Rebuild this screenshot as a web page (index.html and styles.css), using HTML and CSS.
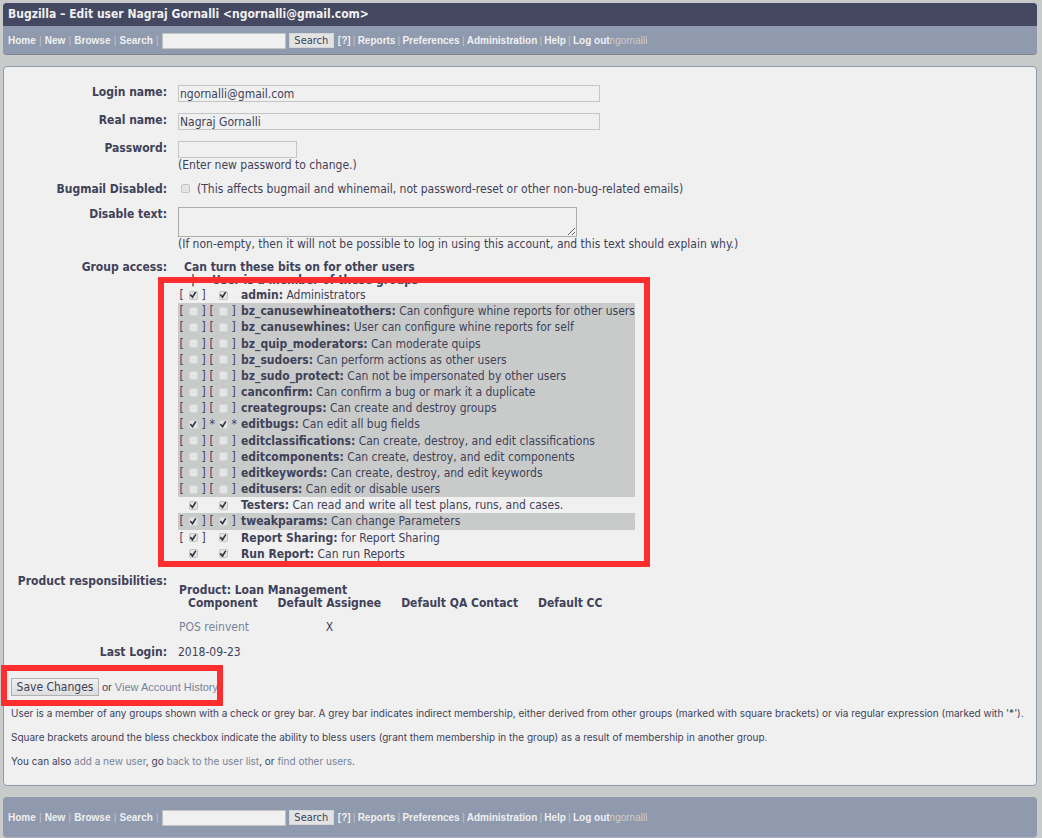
FILE: index.html
```html
<!DOCTYPE html>
<html lang="en">
<head>
<meta charset="utf-8">
<meta name="viewport" content="width=device-width, initial-scale=1">
<title>Bugzilla – Edit user Nagraj Gornalli</title>
<link rel="stylesheet" href="styles.css">
</head>
<body>
<header class="header">
  <h1 class="title">Bugzilla – Edit user Nagraj Gornalli &lt;ngornalli@gmail.com&gt;</h1>
  <nav class="nav" aria-label="Main">
    <a href="#">Home</a><i>|</i><a href="#">New</a><i>|</i><a href="#">Browse</a><i>|</i><a href="#">Search</a><i>|</i>
    <input class="nav-input" type="text" aria-label="Quick search"><button class="nav-button" type="button">Search</button>
    <a href="#">[?]</a><i>|</i><a href="#">Reports</a><i>|</i><a href="#">Preferences</a><i>|</i><a href="#">Administration</a><i>|</i><a href="#">Help</a><i>|</i><a href="#">Log out</a><span class="who">ngornalli</span>
  </nav>
</header>

<main class="panel">
  <form class="form">
    <label class="label" for="login">Login name:</label>
    <div class="field row-text"><input class="text wide" id="login" type="text" value="ngornalli@gmail.com"></div>

    <label class="label" for="real">Real name:</label>
    <div class="field row-text"><input class="text wide" id="real" type="text" value="Nagraj Gornalli"></div>

    <label class="label" for="pass">Password:</label>
    <div class="field row-pass"><input class="text short" id="pass" type="password"><div class="hint">(Enter new password to change.)</div></div>

    <label class="label" for="mail">Bugmail Disabled:</label>
    <div class="field row-mail"><input class="check" id="mail" type="checkbox"><span>(This affects bugmail and whinemail, not password-reset or other non-bug-related emails)</span></div>

    <label class="label" for="disable">Disable text:</label>
    <div class="field row-area"><textarea class="area" id="disable"></textarea><div class="hint">(If non-empty, then it will not be possible to log in using this account, and this text should explain why.)</div></div>

    <div class="label">Group access:</div>
    <div class="field groups">
      <div class="group-head">Can turn these bits on for other users</div>
      <div class="group-sub"><span>|</span><span>User is a member of these groups</span></div>
      <table class="group-table" id="groups" aria-label="Group access"><tbody></tbody></table>
      <div class="mark mark-groups"></div>
    </div>

    <div class="label">Product responsibilities:</div>
    <div class="field products">
      <table class="product-table">
        <caption>Product: Loan Management</caption>
        <thead><tr><th>Component</th><th>Default Assignee</th><th>Default QA Contact</th><th>Default CC</th></tr></thead>
        <tbody><tr><td class="component"><a href="#">POS reinvent</a></td><td>X</td><td></td><td></td></tr></tbody>
      </table>
    </div>

    <div class="label">Last Login:</div>
    <div class="field hint">2018-09-23</div>
  </form>

  <div class="actions">
    <button class="save" type="button">Save Changes</button>
    <span>or <a href="#">View Account History</a></span>
    <div class="mark mark-save"></div>
  </div>

  <div class="notes">
    <p>User is a member of any groups shown with a check or grey bar. A grey bar indicates indirect membership, either derived from other groups (marked with square brackets) or via regular expression (marked with '*').</p>
    <p>Square brackets around the bless checkbox indicate the ability to bless users (grant them membership in the group) as a result of membership in another group.</p>
    <p>You can also <a href="#">add a new user</a>, go <a href="#">back to the user list</a>, or <a href="#">find other users</a>.</p>
  </div>
</main>

<footer class="footer">
  <nav class="nav" aria-label="Footer">
    <a href="#">Home</a><i>|</i><a href="#">New</a><i>|</i><a href="#">Browse</a><i>|</i><a href="#">Search</a><i>|</i>
    <input class="nav-input" type="text" aria-label="Quick search"><button class="nav-button" type="button">Search</button>
    <a href="#">[?]</a><i>|</i><a href="#">Reports</a><i>|</i><a href="#">Preferences</a><i>|</i><a href="#">Administration</a><i>|</i><a href="#">Help</a><i>|</i><a href="#">Log out</a><span class="who">ngornalli</span>
  </nav>
</footer>
<script src="groups.js"></script>
</body>
</html>
```

FILE: groups.js
```js
// name, description, bless brackets, member marks, checked, indirect (grey bar)
const groups = [
  ["admin", "Administrators", "[]", "", true, false],
  ["bz_canusewhineatothers", "Can configure whine reports for other users", "[]", "[]", false, true],
  ["bz_canusewhines", "User can configure whine reports for self", "[]", "[]", false, true],
  ["bz_quip_moderators", "Can moderate quips", "[]", "[]", false, true],
  ["bz_sudoers", "Can perform actions as other users", "[]", "[]", false, true],
  ["bz_sudo_protect", "Can not be impersonated by other users", "[]", "[]", false, true],
  ["canconfirm", "Can confirm a bug or mark it a duplicate", "[]", "[]", false, true],
  ["creategroups", "Can create and destroy groups", "[]", "[]", false, true],
  ["editbugs", "Can edit all bug fields", "[]", "**", true, true],
  ["editclassifications", "Can create, destroy, and edit classifications", "[]", "[]", false, true],
  ["editcomponents", "Can create, destroy, and edit components", "[]", "[]", false, true],
  ["editkeywords", "Can create, destroy, and edit keywords", "[]", "[]", false, true],
  ["editusers", "Can edit or disable users", "[]", "[]", false, true],
  ["Testers", "Can read and write all test plans, runs, and cases.", "", "", true, false],
  ["tweakparams", "Can change Parameters", "[]", "[]", true, true],
  ["Report Sharing", "for Report Sharing", "[]", "", true, false],
  ["Run Report", "Can run Reports", "", "", true, false]
];

const box = (marks, checked, id, label) =>
  `<td class="bit"><span class="marks"><span>${marks[0] || ""}</span>` +
  `<input class="check" type="checkbox" id="${id}" aria-label="${label}"${checked ? " checked" : ""}>` +
  `<span>${marks[1] || ""}</span></span></td>`;

document.querySelector("#groups tbody").innerHTML = groups.map(
  ([name, text, bless, member, checked, indirect], i) =>
    `<tr${indirect ? ' class="indirect"' : ""}>` +
    box(bless, checked, `bless${i}`, `Bless ${name}`) +
    box(member, checked, `member${i}`, `Member of ${name}`) +
    `<td class="group-name"><label for="member${i}"><strong>${name}:</strong> ${text}</label></td></tr>`
).join("");
```

FILE: styles.css
```css
* { box-sizing: border-box; }

body {
  margin: 0;
  padding: 3px 5px 1px 3px;
  background: #c9cbca;
  color: #3f4258;
  font: 12px/14px "DejaVu Sans Condensed", "DejaVu Sans", sans-serif;
}

a { color: #76849a; text-decoration: none; }

.header,
.footer {
  background: #8f9aaf;
  border-radius: 4px;
}

.header { border-bottom: 1px solid #7c8290; overflow: hidden; }

.footer {
  padding: 6px 0;
  border-bottom: 1px solid #aeb2b8;
}

.title {
  margin: 0;
  padding: 0 5px;
  background: #444860;
  color: #f0f0f0;
  font-size: 12px;
  line-height: 23px;
}

.nav {
  display: flex;
  align-items: center;
  height: 28px;
  padding: 1px 5px 0;
  font: bold 10px/14px "Liberation Sans", Arial, sans-serif;
  color: #c4c4c0;
  white-space: nowrap;
}

.nav a { color: #f0f0f0; }
.nav i { width: 9px; text-align: center; font-style: normal; font-weight: normal; }
.nav-input ~ i { width: 7px; }
.who { color: #cfcdc4; font-weight: normal; }

.nav-input {
  width: 124px;
  height: 16px;
  padding: 0 2px;
  border: 1px solid #c4c4c0;
  background: #f0f0f0;
}

.nav-button {
  width: 45px;
  height: 15px;
  margin: 0 4px 0 3px;
  padding: 0;
  border: 1px solid #d6d6d6;
  background: #e2e3e3;
  color: #3f4258;
  font: 11px/12px "DejaVu Sans Condensed", "DejaVu Sans", sans-serif;
}

.panel {
  margin: 11px 0;
  padding: 18px 7px 7px;
  border: 1px solid #8f9aaf;
  border-radius: 4px;
  background: #f0f0f0;
}

.form {
  display: grid;
  grid-template-columns: 156px 1fr;
  column-gap: 11px;
}

.label { font-weight: bold; text-align: right; }

.hint { line-height: 14px; }
.row-text { height: 28px; }
.row-pass { height: 41px; }
.row-area { height: 53px; }
.row-mail { display: flex; gap: 7px; height: 25px; padding-left: 3px; }

.text {
  display: block;
  height: 17px;
  padding: 0 1px;
  border: 1px solid #c4c6c5;
  background: #f0f0f0;
  color: #3f4258;
  font: inherit;
}

.wide { width: 422px; max-width: 100%; }
.short { width: 119px; }

.area {
  display: block;
  width: 399px;
  max-width: 100%;
  height: 30px;
  border: 1px solid #acaea8;
  background: #f0f0f0;
  font: inherit;
}

.check {
  appearance: none;
  flex: none;
  width: 9px;
  height: 9px;
  margin: 0;
  border: 1px solid #c2c4c3;
  border-radius: 2px;
  background: #e4e5e5;
}

.row-mail .check { margin-top: 2px; }

.check:checked::before {
  content: "";
  display: block;
  width: 7px;
  height: 7px;
  background: #333645;
  clip-path: polygon(0 50%, 20% 35%, 40% 60%, 80% 0, 100% 10%, 45% 100%);
}

.groups { position: relative; height: 314px; }
.group-head,
.group-sub { padding-left: 6px; font-weight: bold; }
.group-sub { display: flex; gap: 17px; height: 13px; padding-left: 13px; line-height: 12px; }

.group-table {
  width: 453px;
  height: 275px;
  border-spacing: 0;
  line-height: 14px;
}

.group-table td { padding: 0; }
.group-table .bit { width: 30px; }
.group-table .group-name { padding-left: 3px; white-space: nowrap; }
.indirect { background: #c9cbca; }
.indirect .check { border-color: #d4d5d4; }

.marks {
  display: flex;
  align-items: center;
  justify-content: center;
  gap: 4px;
  width: 30px;
  height: 14px;
}

.marks span { width: 5px; }

/* Red highlight frames drawn over the form */
.mark {
  position: absolute;
  border: 6px solid #ff2e2e;
  pointer-events: none;
}

.mark-groups { top: 17px; left: -20px; width: 492px; height: 290px; }
.mark-save { top: -13px; left: -10px; width: 222px; height: 41px; }

.products { height: 71px; padding-top: 10px; }

.product-table { border-spacing: 0; text-align: center; }
.product-table caption { padding-left: 1px; font-weight: bold; line-height: 13px; text-align: left; }
.product-table th { padding: 0 10px; line-height: 13px; }
.product-table td { padding: 10px 0 0; }
.product-table .component { padding-left: 1px; text-align: left; }

.actions {
  position: relative;
  display: flex;
  align-items: center;
  gap: 3px;
  width: fit-content;
  margin-top: 19px;
  font: 11px/14px "Liberation Sans", Arial, sans-serif;
}

.save {
  width: 88px;
  height: 18px;
  padding: 0;
  border: 1px solid #b0b2b2;
  background: linear-gradient(#f0f0f0, #dcdddd);
  color: #3f4258;
  font: 12px/14px "DejaVu Sans Condensed", "DejaVu Sans", sans-serif;
}

.notes { font: 10px/14px Inter, Arial, sans-serif; }
.notes p { margin: 10px 0; }
```
